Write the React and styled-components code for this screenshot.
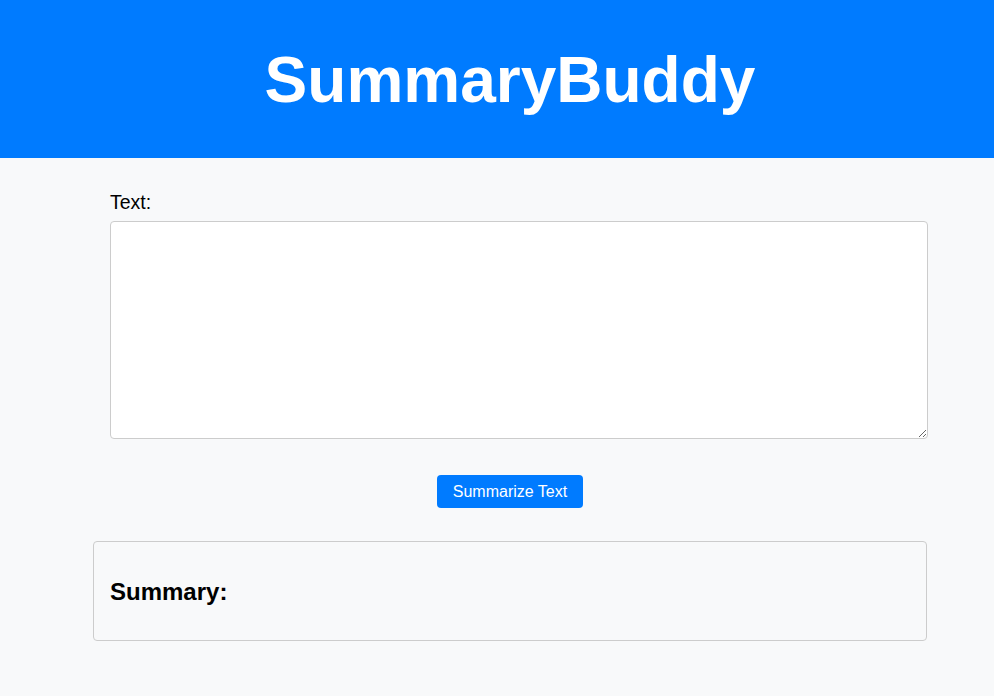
import React from 'react'
import styled, { createGlobalStyle } from 'styled-components'

const GlobalStyle = createGlobalStyle`
  html, body {
    margin: 0;
    padding: 0;
    background-color: #f8f9fa;
    font-family: "Liberation Sans", Arial, sans-serif;
    color: #000;
  }
`

function App() {
  return (
    <>
      <GlobalStyle />
      <Header>
        <Title>SummaryBuddy</Title>
      </Header>

      <Main>
        <Form onSubmit={(e) => e.preventDefault()}>
          <Label htmlFor='text'>Text:</Label>
          <TextArea id='text' />
          <ButtonRow>
            <Button type='submit'>Summarize Text</Button>
          </ButtonRow>
        </Form>

        <SummaryBox>
          <SummaryTitle>Summary:</SummaryTitle>
        </SummaryBox>
      </Main>
    </>
  )
}

export default App

const Header = styled.header`
  height: 158px;
  background-color: #007bff;
  display: flex;
  align-items: center;
  justify-content: center;
  padding-left: 26px;
  box-sizing: border-box;
`

const Title = styled.h1`
  margin: 0;
  color: #fff;
  font-size: 64px;
  font-weight: bold;
  line-height: 1.15;
  padding-top: 3px;
`

const Main = styled.main`
  width: 834px;
  margin-left: 93px;
  padding-top: 15px;
`

const Form = styled.form`
  padding: 17px 17px 0;
  margin: 0;
`

const Label = styled.label`
  display: block;
  font-size: 19.5px;
  line-height: 21px;
  padding-top: 2px;
  margin-bottom: 8px;
`

const TextArea = styled.textarea`
  display: block;
  box-sizing: border-box;
  width: 818px;
  height: 218px;
  padding: 8px;
  border: 1px solid #ccc;
  border-radius: 4px;
  background: #fff;
  font-family: "Liberation Sans", Arial, sans-serif;
  font-size: 16px;
  margin: 0;
`

const ButtonRow = styled.div`
  display: flex;
  justify-content: center;
  margin-top: 36px;
`

const Button = styled.button`
  height: 33px;
  padding: 0 16px;
  border: none;
  border-radius: 4px;
  background-color: #007bff;
  color: #fff;
  font-family: "Liberation Sans", Arial, sans-serif;
  font-size: 16px;
  cursor: pointer;
`

const SummaryBox = styled.section`
  margin-top: 33px;
  height: 100px;
  box-sizing: border-box;
  padding: 0 16px;
  border: 1px solid #ccc;
  border-radius: 4px;
  display: flex;
  align-items: center;
`

const SummaryTitle = styled.h2`
  margin: 0;
  font-size: 24px;
  font-weight: bold;
  padding-top: 2px;
`
